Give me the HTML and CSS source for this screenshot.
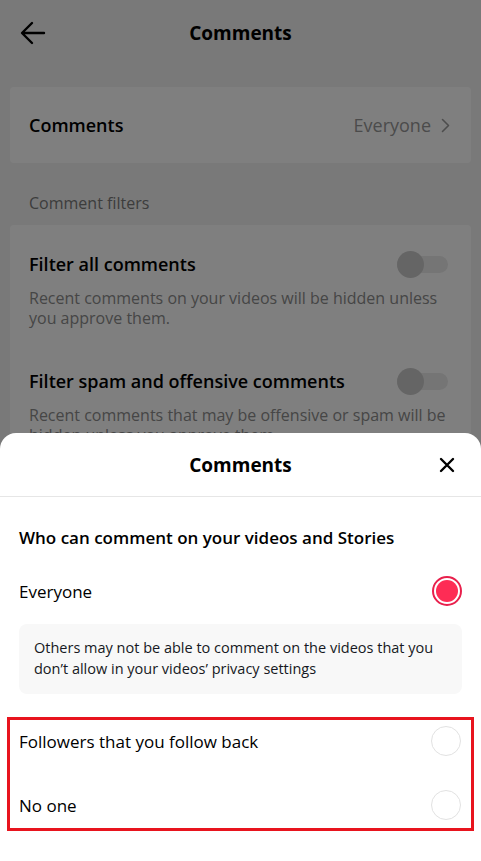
FILE: index.html
```html
<!DOCTYPE html>
<html>
<head>
<meta charset="utf-8">
<link rel="stylesheet" href="styles.css">
</head>
<body>
<div class="page">
  <header class="topbar">
    <svg class="back" width="26" height="24" viewBox="0 0 26 24"><path d="M24 12H3M12 2L2 12l10 10" fill="none" stroke="#000" stroke-width="2.4" stroke-linecap="round" stroke-linejoin="round"/></svg>
    <div class="top-title">Comments</div>
  </header>
  <div class="card card-one">
    <div class="row-label">Comments</div>
    <div class="row-value">Everyone
      <svg width="9" height="15" viewBox="0 0 9 15"><path d="M1.5 1.5l6 6-6 6" fill="none" stroke="#9a9a9a" stroke-width="1.6" stroke-linecap="round" stroke-linejoin="round"/></svg>
    </div>
  </div>
  <div class="section-label">Comment filters</div>
  <div class="card card-two">
    <div class="filter">
      <div class="filter-head">
        <div class="filter-title">Filter all comments</div>
        <div class="toggle"><span class="knob"></span></div>
      </div>
      <div class="filter-desc">Recent comments on your videos will be hidden unless you approve them.</div>
    </div>
    <div class="filter">
      <div class="filter-head">
        <div class="filter-title">Filter spam and offensive comments</div>
        <div class="toggle"><span class="knob"></span></div>
      </div>
      <div class="filter-desc">Recent comments that may be offensive or spam will be hidden unless you approve them.</div>
    </div>
  </div>
</div>
<div class="overlay"></div>
<div class="sheet">
  <div class="sheet-head">
    <div class="sheet-title">Comments</div>
    <svg class="close" width="16" height="16" viewBox="0 0 16 16"><path d="M2 2l12 12M14 2L2 14" fill="none" stroke="#000" stroke-width="2.4" stroke-linecap="round"/></svg>
  </div>
  <div class="sheet-body">
    <div class="question">Who can comment on your videos and Stories</div>
    <div class="option first">
      <span>Everyone</span>
      <span class="radio on"><span class="dot"></span></span>
    </div>
    <div class="info">Others may not be able to comment on the videos that you don’t allow in your videos’ privacy settings</div>
    <div class="highlight">
      <div class="option">
        <span>Followers that you follow back</span>
        <span class="radio"></span>
      </div>
      <div class="option">
        <span>No one</span>
        <span class="radio"></span>
      </div>
    </div>
  </div>
</div>
</body>
</html>
```

FILE: styles.css
```css
* { box-sizing: border-box; }
html, body { margin: 0; padding: 0; }
body {
  width: 481px;
  height: 861px;
  overflow: hidden;
  position: relative;
  background: #f2f2f2;
  font-family: "Open Sans", "Lato", sans-serif;
  color: #000;
}
.page { padding: 0 10px; }
.topbar {
  height: 66px;
  position: relative;
  display: flex;
  align-items: center;
  justify-content: center;
}
.back { position: absolute; left: 10px; top: 21px; }
.top-title { font-size: 19px; font-weight: 700; }
.card {
  background: #fff;
  border-radius: 4px;
}
.card-one {
  margin-top: 21px;
  height: 76px;
  display: flex;
  align-items: center;
  justify-content: space-between;
  padding: 0 21px 0 19px;
}
.row-label { font-size: 18px; font-weight: 600; }
.row-value {
  font-size: 18px;
  color: #979797;
  display: flex;
  align-items: center;
  gap: 10px;
}
.section-label {
  font-size: 16px;
  color: #7a7a7a;
  padding: 29px 19px 0;
  height: 62px;
}
.card-two { padding: 24px 19px 40px; }
.filter { margin-bottom: 38px; }
.filter-head {
  display: flex;
  justify-content: space-between;
  align-items: center;
  height: 30px;
}
.filter-title { font-size: 18px; font-weight: 600; }
.filter-desc {
  font-size: 16px;
  line-height: 20px;
  color: #8c8c8c;
  margin-top: 9px;
}
.toggle {
  position: relative;
  width: 51px;
  height: 17px;
  border-radius: 9px;
  background: #eaeaea;
  margin-right: 4px;
}
.knob {
  position: absolute;
  left: 0;
  top: -5px;
  width: 27px;
  height: 27px;
  border-radius: 50%;
  background: #cbcbcb;
}
.overlay {
  position: absolute;
  inset: 0;
  background: rgba(0, 0, 0, 0.5);
}
.sheet {
  position: absolute;
  left: 0;
  right: 0;
  top: 433px;
  bottom: 0;
  background: #fff;
  border-radius: 16px 16px 0 0;
}
.sheet-head {
  height: 64px;
  border-bottom: 1px solid #e6e6e6;
  display: flex;
  align-items: center;
  justify-content: center;
  position: relative;
}
.sheet-title { font-size: 19px; font-weight: 700; }
.close { position: absolute; right: 26px; top: 24px; }
.sheet-body { padding: 28px 19px 0; }
.question { font-size: 17px; font-weight: 600; height: 26px; line-height: 26px; }
.option {
  display: flex;
  justify-content: space-between;
  align-items: center;
  height: 42px;
  font-size: 17px;
}
.option.first { margin-top: 19px; }
.radio {
  width: 30px;
  height: 30px;
  border-radius: 50%;
  border: 1.5px solid #e2e2e2;
  display: flex;
  align-items: center;
  justify-content: center;
}
.radio.on { border: 2px solid #e8204c; }
.dot {
  width: 22px;
  height: 22px;
  border-radius: 50%;
  background: #fe2c55;
}
.info {
  margin-top: 12px;
  background: #f8f8f8;
  border-radius: 8px;
  padding: 13px 15px 14px;
  font-size: 14.5px;
  line-height: 21px;
  color: #161823;
  height: 70px;
}
.highlight {
  margin: 23px -12px 0 -12px;
  border: 3px solid #e8141e;
  padding: 0 10px 2px 9px;
  display: flex;
  flex-direction: column;
  gap: 22px;
}
```
